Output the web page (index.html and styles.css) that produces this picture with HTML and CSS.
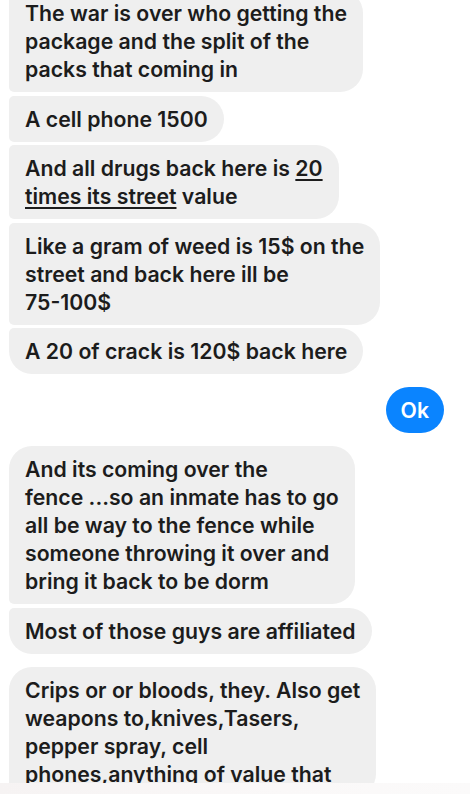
FILE: index.html
```html
<!DOCTYPE html>
<html>
<head>
<meta charset="utf-8">
<link rel="stylesheet" href="styles.css">
</head>
<body>
<div class="chat">
  <div class="group in">
    <div class="bubble">The war is over who getting the<br>package and the split of the<br>packs that coming in</div>
    <div class="bubble">A cell phone 1500</div>
    <div class="bubble">And all drugs back here is <u>20</u><br><u>times its street</u> value</div>
    <div class="bubble">Like a gram of weed is 15$ on the<br>street and back here ill be<br>75-100$</div>
    <div class="bubble last">A 20 of crack is 120$ back here</div>
  </div>
  <div class="group out">
    <div class="bubble blue">Ok</div>
  </div>
  <div class="group in">
    <div class="bubble first">And its coming over the<br>fence ...so an inmate has to go<br>all be way to the fence while<br>someone throwing it over and<br>bring it back to be dorm</div>
    <div class="bubble last">Most of those guys are affiliated</div>
  </div>
  <div class="group in">
    <div class="bubble first">Crips or or bloods, they. Also get<br>weapons to,knives,Tasers,<br>pepper spray, cell<br>phones,anything of value that</div>
  </div>
</div>
<div class="bottom-fade"></div>
</body>
</html>
```
FILE: styles.css
```css
html, body {
  margin: 0;
  padding: 0;
  background: #ffffff;
  height: 794px;
  overflow: hidden;
}
body {
  font-family: Inter, "Noto Sans", sans-serif;
  font-weight: 600;
  font-size: 21.25px;
  color: #1c1c1c;
}
.chat {
  display: flex;
  flex-direction: column;
  gap: 13px;
  padding: 0 26px 0 9px;
  margin-top: -10px;
}
.group {
  display: flex;
  flex-direction: column;
  gap: 3.5px;
}
.group.in { align-items: flex-start; }
.group.out { align-items: flex-end; }
.bubble {
  background: #efefef;
  line-height: 28px;
  padding: 9px 16px;
  border-radius: 5px 23px 23px 5px;
  white-space: nowrap;
}
.bubble u {
  text-decoration-thickness: 1.5px;
  text-underline-offset: 3px;
}
.bubble.first { border-top-left-radius: 23px; }
.bubble.last { border-bottom-left-radius: 23px; }
.bubble.blue {
  background: #0a84ff;
  color: #ffffff;
  border-radius: 23px;
  padding: 9px 15px;
}
.bottom-fade {
  position: fixed;
  left: 0;
  right: 0;
  bottom: 0;
  height: 11px;
  background: linear-gradient(90deg, #f6f3f3, #faf8f8 60%, #fbfafa);
}
```
